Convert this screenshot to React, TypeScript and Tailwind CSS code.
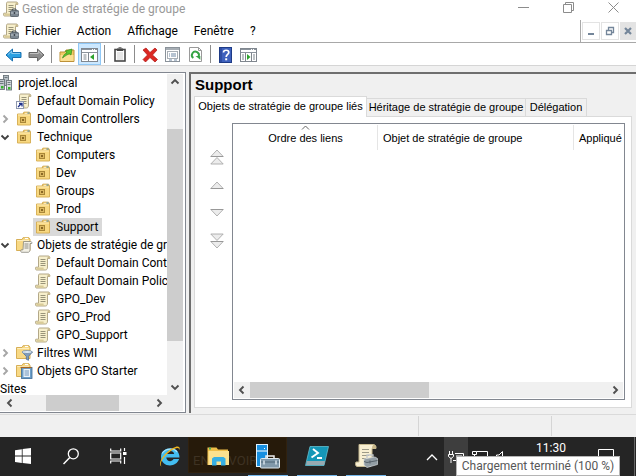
import type { ReactNode } from 'react';

const uiFont = "font-['Roboto','Noto_Sans',sans-serif]";
const classicFont = "font-['Liberation_Sans',Arial,sans-serif]";

/* ---------- icons ---------- */

function ScrollIcon({ toolbox = false, shortcut = false }: { toolbox?: boolean; shortcut?: boolean }) {
  return (
    <svg width="16" height="16" viewBox="0 0 16 16" className="block shrink-0" aria-hidden="true">
      <path d="M4.500 1h8.500c1.500 0 2 .8 1.800 2.500H12.500V12c0 2-.8 3-2 3H1.500C.5 15 .3 13.500.8 12.200H3.500V3C3.500 1.800 3.800 1 4.500 1z" fill="#f7efcb" stroke="#aa9e7d" strokeWidth=".9" />
      <path d="M12.500 3.500c0-1.500.3-2.300 1-2.300s1.500.8 1.300 2.300z" fill="#c9b98b" />
      <path d="M1 12.500h7.500c0 1.500.5 2.300 1.500 2.300H2z" fill="#d9cb98" />
      <path d="M5.500 4.500h5M5.500 6.500h5M5.500 8.500h5M5.500 10.500h5" stroke="#99947a" strokeWidth="1" />
      {toolbox && (
        <g>
          <path d="M9.500 9.500V8h3.500v1.500" fill="none" stroke="#4b5560" />
          <rect x="7.500" y="9.500" width="8" height="6" rx=".8" fill="#7c8791" stroke="#4f5963" strokeWidth=".8" />
          <path d="M8 12h7.500" stroke="#c7d0d7" strokeWidth=".9" />
          <rect x="10.700" y="11" width="1.500" height="2" fill="#3f474f" />
        </g>
      )}
      {shortcut && (
        <g>
          <rect x=".5" y="8.500" width="7" height="7" fill="#fff" stroke="#8d97ad" />
          <path d="M2 14l3.500-3.500M3 10.500h3v3" fill="none" stroke="#20328a" strokeWidth="1.300" />
        </g>
      )}
    </svg>
  );
}

function OuIcon() {
  return (
    <svg width="16" height="16" viewBox="0 0 16 16" className="block shrink-0" aria-hidden="true">
      <path d="M7 3l.8-2h5.700l1 2z" fill="#e8c260" stroke="#c99c3c" strokeWidth=".6" />
      <path d="M1.500 3h13v11h-13z" fill="#f8d880" stroke="#d5ab4e" strokeWidth=".9" />
      <path d="M8.500 2.300h3" stroke="#fff6d8" />
      <rect x="11.500" y="1.500" width="2" height="1" fill="#4d9cda" />
      <path d="M2 4h12" stroke="#fdeab4" />
      <rect x="4.500" y="6.500" width="5" height="5" fill="#dcb962" stroke="#a98637" />
      <rect x="6" y="8" width="2" height="2" fill="#8a6824" />
    </svg>
  );
}

function FolderIcon({ overlay }: { overlay: 'scroll' | 'filter' | 'starter' }) {
  return (
    <svg width="17" height="16" viewBox="0 0 17 16" className="block shrink-0" aria-hidden="true">
      <path d="M.5 2.500h5.500l1-1.800h6l1 1.800V13.500H.5z" fill="#f8d985" stroke="#d3a849" strokeWidth=".9" />
      <path d="M1.200 3.500h12" stroke="#fdedbd" />
      <rect x="9" y="1" width="3" height="1" fill="#fff" />
      {overlay === 'scroll' && (
        <g>
          <path d="M7.500 4.500h7c1.200 0 1.500 1 1.300 2H14v6c0 1.800-.7 2.800-2 2.800H5.500c-1-.3-.9-1.600-.5-2.500H7z" fill="#f3f1e6" stroke="#88867c" strokeWidth=".8" />
          <path d="M8.500 7h4M8.500 9h4M8.500 11h4" stroke="#77776d" strokeWidth=".8" />
        </g>
      )}
      {overlay === 'filter' && (
        <g>
          <path d="M6 7h10.500l-4 4.300v4l-2.200-1v-3z" fill="#7e9cbd" stroke="#546f8f" strokeWidth=".8" />
          <ellipse cx="11.200" cy="7" rx="5" ry="1.500" fill="#dce9f4" stroke="#64809e" strokeWidth=".7" />
        </g>
      )}
      {overlay === 'starter' && (
        <g>
          <rect x="5.500" y="4.500" width="10.500" height="11" fill="#6d9fc9" stroke="#3d6a95" strokeWidth=".8" />
          <rect x="7.500" y="6" width="6.500" height="8" fill="#edf4fa" />
          <path d="M8.500 8h4.500M8.500 10h4.500M8.500 12h4.500" stroke="#4a7aa8" strokeWidth=".8" />
          <path d="M4.500 4.500h11" stroke="#a9651c" strokeWidth="1.200" />
        </g>
      )}
    </svg>
  );
}

function DomainIcon() {
  return (
    <svg width="13" height="16" viewBox="0 0 13 16" className="block shrink-0" aria-hidden="true">
      <rect x="3.500" y=".5" width="5" height="10" fill="#b6bec4" stroke="#6c757c" strokeWidth=".9" />
      <rect x="-.5" y="4.500" width="5" height="10" fill="#c4cbd0" stroke="#6c757c" strokeWidth=".9" />
      <rect x="6.500" y="5.500" width="5" height="9.500" fill="#d4dade" stroke="#6c757c" strokeWidth=".9" />
      <path d="M4.500 2.500h3M0 6.500h3.500M7.500 7.500h3M0 8.500h3.500M7.500 9.500h3" stroke="#59636b" strokeWidth=".8" />
      <rect x="1" y="11" width="2.500" height="2.500" fill="#35b32d" />
      <rect x="8" y="12" width="2.500" height="2.500" fill="#35b32d" />
    </svg>
  );
}

type Direction = 'up' | 'down' | 'left' | 'right';

function Chevron({ dir, tone = 'text-[#505050]' }: { dir: Direction; tone?: string }) {
  const paths: Record<Direction, string> = {
    up: 'M1.500 6.500L5 3l3.500 3.500',
    down: 'M1.500 3.500L5 7l3.500-3.500',
    left: 'M6.500 1.500L3 5l3.500 3.500',
    right: 'M3.500 1.500L7 5 3.500 8.500',
  };
  return (
    <svg width="10" height="10" viewBox="0 0 10 10" className={`block shrink-0 ${tone}`} aria-hidden="true">
      <path d={paths[dir]} fill="none" stroke="currentColor" strokeWidth="1.900" />
    </svg>
  );
}

function Arrow({ color, edge, flip = false }: { color: string; edge: string; flip?: boolean }) {
  return (
    <svg width="17" height="16" viewBox="0 0 17 16" className={flip ? '-scale-x-100' : ''} aria-hidden="true">
      <path d="M1 8l6.500-6v3.500H16v5H7.500V14z" fill={color} stroke={edge} strokeLinejoin="round" />
      <path d="M3 7.600L6.700 4.200V6.500H15" fill="none" stroke="#fff" strokeOpacity=".45" />
    </svg>
  );
}

function PaneIcon({ left }: { left: boolean }) {
  return (
    <svg width="17" height="14" viewBox="0 0 17 14" aria-hidden="true">
      <rect x=".5" y=".5" width="16" height="13" fill="#fff" stroke="#80878f" />
      <path d="M1 1.500h15" stroke="#8b939c" />
      <path d="M11 1.500h1M13 1.500h1" stroke="#fff" />
      <path d="M1 4.500h15" stroke="#8b939c" />
      <path d={left ? 'M7.500 5v8' : 'M5.500 5v8M11.500 5v8'} stroke="#80878f" />
      <path d={left ? 'M2.500 7h3M2.500 9h3M2.500 11h3' : 'M2 7h2M2 9h2M2 11h2M13 7h2M13 9h2M13 11h2'} stroke="#7d858c" />
      <path d={left ? 'M13 6v6l-4-3z' : 'M7 6v6l3.500-3z'} fill="#2da22c" />
    </svg>
  );
}

/* ---------- scroll bars ---------- */

function ScrollButton({ dir }: { dir: Direction }) {
  return (
    <button type="button" aria-label={dir} className="flex size-4 shrink-0 items-center justify-center">
      <Chevron dir={dir} />
    </button>
  );
}

/* ---------- menu and tool bars ---------- */

function TitleBar() {
  return (
    <header className="flex h-5 shrink-0 items-start bg-white pt-px pl-[3px]">
      <ScrollIcon toolbox />
      <h1 className="pl-[3px] text-[12px] leading-4 text-[#999]">Gestion de stratégie de groupe</h1>
      <div className="ml-auto flex h-[13px] text-[#8c8c8c]">
        <button type="button" aria-label="Réduire" className="flex w-[45px] items-center justify-center">
          <svg width="11" height="11" viewBox="0 0 11 11"><path d="M0 5.500h11" stroke="currentColor" /></svg>
        </button>
        <button type="button" aria-label="Restaurer" className="flex w-[45px] items-center justify-center">
          <svg width="11" height="11" viewBox="0 0 11 11"><path d="M.5 2.500h8v8h-8zM2.500 2.500v-2h8v8h-2" fill="none" stroke="currentColor" /></svg>
        </button>
        <button type="button" aria-label="Fermer" className="flex w-[45px] items-center justify-center">
          <svg width="11" height="11" viewBox="0 0 11 11"><path d="M.5.5l10 10M10.500.5l-10 10" stroke="currentColor" /></svg>
        </button>
      </div>
    </header>
  );
}

function MenuBar() {
  return (
    <div className="flex h-[23px] shrink-0 border-b border-[#a8a8a8] bg-white">
      <div className="flex grow items-center pl-[3px]">
        <ScrollIcon toolbox />
        <nav className="flex gap-4 pl-1.5 text-[12px] leading-4">
          {['Fichier', 'Action', 'Affichage', 'Fenêtre', '?'].map((m) => (
            <button key={m} type="button">{m}</button>
          ))}
        </nav>
      </div>
      <div className="flex items-center gap-px border-l border-[#a8a8a8] pl-px text-[#74869a]">
        <button type="button" aria-label="Réduire la fenêtre" className="flex size-[18px] items-center justify-center border border-[#e3e3e3]">
          <svg width="12" height="12" viewBox="0 0 12 12"><path d="M3 9h6" stroke="currentColor" strokeWidth="2" /></svg>
        </button>
        <button type="button" aria-label="Restaurer la fenêtre" className="flex size-[18px] items-center justify-center border border-[#e3e3e3]">
          <svg width="12" height="12" viewBox="0 0 12 12"><path d="M2.500 5.500h5v4h-5zM4.500 5V2.500h5v5H8M2 5.500h6M4 2.500h6" fill="none" stroke="currentColor" strokeWidth="1.300" /></svg>
        </button>
        <button type="button" aria-label="Fermer la fenêtre" className="flex h-[18px] w-4 items-center justify-center bg-[#e3e3e3]">
          <svg width="12" height="12" viewBox="0 0 12 12"><path d="M3 3l6 6M9 3L3 9" stroke="currentColor" strokeWidth="2.200" /></svg>
        </button>
      </div>
    </div>
  );
}

function Tool({ label, active = false, children }: { label: string; active?: boolean; children: ReactNode }) {
  return (
    <button
      type="button"
      aria-label={label}
      className={`flex h-[22px] w-[23px] items-center justify-center border pt-px ${active ? 'border-[#90c8f6] bg-[#cce8ff]' : 'border-transparent'}`}
    >
      <span className="shrink-0">{children}</span>
    </button>
  );
}

function Separator() {
  return <span className="mx-[3px] h-[18px] w-px bg-[#8c8c8c]" />;
}

function ToolBar() {
  return (
    <div role="toolbar" className="flex h-[23px] shrink-0 items-center border-b border-[#d5d5d5] bg-white pl-0.5">
      <Tool label="Précédent"><Arrow color="#2ba0e2" edge="#1970b0" /></Tool>
      <Tool label="Suivant"><Arrow color="#8d8d8d" edge="#666" flip /></Tool>
      <Separator />
      <Tool label="Dossier parent">
        <svg width="16" height="16" viewBox="0 0 16 16">
          <path d="M1 5h5l1-2h8v11.500H1z" fill="#f2ca68" stroke="#bd9137" />
          <path d="M1.500 8h13v6h-13z" fill="#fbdf94" />
          <path d="M3.500 11c1-3 2.500-4.500 4.500-5L6.500 4l6.500-2-1 6-1.800-1.200C8.500 7.500 6 9 3.500 11z" fill="#5cc52f" stroke="#358c1c" strokeWidth=".7" />
        </svg>
      </Tool>
      <Tool label="Arborescence" active><PaneIcon left /></Tool>
      <Separator />
      <Tool label="Coller">
        <svg width="12" height="15" viewBox="0 0 12 15">
          <rect x="1" y="2.500" width="10" height="11.500" fill="#fff" stroke="#484848" strokeWidth="1.600" />
          <path d="M3 1.500h6v2.500H3z" fill="#484848" /><path d="M4.500.8h3" stroke="#484848" />
          <path d="M3 6h6M3 8h6M3 10h6M3 12h6" stroke="#b9b9b9" strokeWidth=".7" />
        </svg>
      </Tool>
      <Separator />
      <Tool label="Supprimer">
        <svg width="16" height="16" viewBox="0 0 16 16">
          <path d="M1 3l3-2 4 4.500L13 1l2 2-4.500 5 5 4.500-2.500 2.500L8 10.500 3.500 15 1 12.500 5.500 8z" fill="#dc2822" stroke="#ad1512" strokeWidth=".7" />
        </svg>
      </Tool>
      <Tool label="Propriétés">
        <svg width="15" height="15" viewBox="0 0 15 15">
          <rect x=".5" y=".5" width="14" height="14" fill="#fff" stroke="#8a929a" />
          <path d="M1 2h13" stroke="#a6adb4" strokeWidth="2" />
          <rect x="2.500" y="4.500" width="10" height="7" fill="none" stroke="#a9afb5" />
          <path d="M4 7h1M4 9h1M6 7h5M6 9h5M4 13h3M9 13h3" stroke="#6e88a4" />
        </svg>
      </Tool>
      <Tool label="Actualiser">
        <svg width="13" height="15" viewBox="0 0 13 15">
          <path d="M.5.500h9l3 3v11H.5z" fill="#fff" stroke="#9a9a9a" /><path d="M9.500.5v3h3" fill="none" stroke="#9a9a9a" />
          <path d="M4.300 11A3.500 3.500 0 1 1 9.500 9.800" fill="none" stroke="#35a344" strokeWidth="1.900" />
          <path d="M6.500 9h4.800v3.800z" fill="#35a344" />
        </svg>
      </Tool>
      <Separator />
      <Tool label="Aide">
        <svg width="13" height="16" viewBox="0 0 13 16">
          <rect x=".5" y=".5" width="12" height="15" fill="#3e61bd" stroke="#1e3b86" /><path d="M2 1v14" stroke="#203d8b" />
          <path d="M4.500 5.500C4.500 2.500 9.800 2.500 9.800 5.500 9.800 7.500 7.200 7.500 7.200 10" fill="none" stroke="#fff" strokeWidth="1.700" />
          <rect x="6.200" y="11.300" width="2" height="2" fill="#fff" />
        </svg>
      </Tool>
      <Tool label="Volet Actions"><PaneIcon left={false} /></Tool>
    </div>
  );
}

/* ---------- tree ---------- */

type Node = { label: string; level: 0 | 1 | 2; icon?: ReactNode; state?: 'open' | 'closed'; selected?: boolean };

const nodes: Node[] = [
  { label: 'projet.local', level: 0, icon: <DomainIcon /> },
  { label: 'Default Domain Policy', level: 1, icon: <ScrollIcon shortcut /> },
  { label: 'Domain Controllers', level: 1, icon: <OuIcon />, state: 'closed' },
  { label: 'Technique', level: 1, icon: <OuIcon />, state: 'open' },
  { label: 'Computers', level: 2, icon: <OuIcon /> },
  { label: 'Dev', level: 2, icon: <OuIcon /> },
  { label: 'Groups', level: 2, icon: <OuIcon /> },
  { label: 'Prod', level: 2, icon: <OuIcon /> },
  { label: 'Support', level: 2, icon: <OuIcon />, selected: true },
  { label: 'Objets de stratégie de groupe', level: 1, icon: <FolderIcon overlay="scroll" />, state: 'open' },
  { label: 'Default Domain Controllers Policy', level: 2, icon: <ScrollIcon /> },
  { label: 'Default Domain Policy', level: 2, icon: <ScrollIcon /> },
  { label: 'GPO_Dev', level: 2, icon: <ScrollIcon /> },
  { label: 'GPO_Prod', level: 2, icon: <ScrollIcon /> },
  { label: 'GPO_Support', level: 2, icon: <ScrollIcon /> },
  { label: 'Filtres WMI', level: 1, icon: <FolderIcon overlay="filter" />, state: 'closed' },
  { label: 'Objets GPO Starter', level: 1, icon: <FolderIcon overlay="starter" />, state: 'closed' },
  { label: 'Sites', level: 0 },
];

function TreeRow({ node }: { node: Node }) {
  const gutter = node.level === 0 ? 'w-0' : node.level === 1 ? 'w-4' : 'w-[33px]';
  return (
    <li role="treeitem" aria-selected={!!node.selected} className="flex h-[18px] items-center whitespace-nowrap">
      <span className={`flex shrink-0 ${gutter}`}>
        {node.state === 'closed' && <Chevron dir="right" tone="text-[#a6a6a6]" />}
        {node.state === 'open' && <Chevron dir="down" tone="text-[#404040]" />}
      </span>
      <span className={`flex h-[18px] items-center ${node.level === 2 ? 'px-0.5' : ''} ${node.selected ? 'bg-[#d9d9d9] pr-1' : ''}`}>
        {node.icon && <span className={`flex shrink-0 ${node.level === 0 ? 'w-[18px]' : 'w-[21px]'}`}>{node.icon}</span>}
        <span>{node.label}</span>
      </span>
    </li>
  );
}

function TreePane() {
  return (
    <aside className="flex w-[186px] shrink-0 flex-col border-y border-r border-[#828790] bg-white pt-px pr-0.5 pb-px">
      <div className="flex min-h-0 grow">
        <ul role="tree" className="min-h-0 min-w-0 grow overflow-hidden text-[12px] leading-[18px]">
          {nodes.map((n, i) => <TreeRow key={i} node={n} />)}
        </ul>
        <div className="flex w-4 shrink-0 flex-col items-center bg-[#f0f0f0]">
          <ScrollButton dir="up" />
          <div className="flex w-full grow flex-col pt-[39px]">
            <span className="h-[212px] bg-[#cdcdcd]" />
          </div>
          <ScrollButton dir="down" />
        </div>
      </div>
      <div className="flex h-4 shrink-0 items-center bg-[#f0f0f0] pr-4 pl-0.5">
        <ScrollButton dir="left" />
        <div className="flex h-full grow pl-7"><span className="w-[73px] bg-[#cdcdcd]" /></div>
        <ScrollButton dir="right" />
      </div>
    </aside>
  );
}

/* ---------- detail pane ---------- */

function OrderIcon({ double = false, down = false }: { double?: boolean; down?: boolean }) {
  return (
    <svg width="14" height={double ? 16 : 9} viewBox={double ? '0 0 14 16' : '0 0 14 9'} className={`block ${down ? 'rotate-180' : ''}`} aria-hidden="true">
      <path d="M.8 7.500h12.400L7 1z" fill="#ececec" stroke="#a9a9a9" strokeWidth=".9" />
      {double && <path d="M.8 15h12.400L7 8.500z" fill="#ececec" stroke="#a9a9a9" strokeWidth=".9" />}
      <path d="M.8 7.500h12.400" stroke="#989898" />
    </svg>
  );
}

function DetailPane() {
  return (
    <main className={`flex min-w-0 grow flex-col border-t-2 border-l-2 border-[#6e6e6e] bg-[#f0f0f0] ${classicFont}`}>
      <h2 className="h-[22px] shrink-0 pl-1 text-[15px] leading-[22px] font-bold">Support</h2>
      <div role="tablist" className="flex h-5 shrink-0 items-end pl-[3px] text-[11px]">
        <button type="button" role="tab" aria-selected="true" className="z-10 -mb-px h-[21px] w-[173px] border border-b-0 border-[#dadada] bg-white pb-0.5 whitespace-nowrap">Objets de stratégie de groupe liés</button>
        <button type="button" role="tab" aria-selected="false" className="h-[18px] w-[159px] border border-b-0 border-l-0 border-[#dadada] whitespace-nowrap">Héritage de stratégie de groupe</button>
        <button type="button" role="tab" aria-selected="false" className="h-[18px] w-[61px] border border-b-0 border-l-0 border-[#dadada]">Délégation</button>
      </div>
      <section className="mr-1 mb-[5px] ml-[3px] flex min-h-0 grow border border-[#dadada] bg-white pt-1.5 pr-1.5 pb-[7px]">
        <div className="flex w-[37px] shrink-0 flex-col items-center pt-[26px] pl-1.5">
          <button type="button" aria-label="Déplacer en premier" className="flex h-8"><OrderIcon double /></button>
          <button type="button" aria-label="Monter" className="flex h-[27px]"><OrderIcon /></button>
          <button type="button" aria-label="Descendre" className="flex h-[25px]"><OrderIcon down /></button>
          <button type="button" aria-label="Déplacer en dernier"><OrderIcon double down /></button>
        </div>
        <div className="flex min-w-0 grow flex-col border border-[#828790] p-px">
          <div className="grow overflow-hidden">
            <table className="w-full table-fixed border-separate border-spacing-0 text-[11px] leading-4">
              <thead>
                <tr className="h-[25px]">
                  <th scope="col" className="w-36 border-r border-[#e5e5e5] p-0 font-normal">
                    <span className="flex flex-col items-center">
                      <svg width="9" height="5" viewBox="0 0 9 5" className="block" aria-hidden="true"><path d="M1 4.500l3.500-3.500L8 4.500" fill="none" stroke="#666" /></svg>
                      <span className="pb-1">Ordre des liens</span>
                    </span>
                  </th>
                  <th scope="col" className="w-[196px] border-r border-[#e5e5e5] p-0 pl-[5px] text-left font-normal">Objet de stratégie de groupe</th>
                  <th scope="col" className="overflow-hidden p-0 pl-[5px] text-left font-normal whitespace-nowrap">Appliqué</th>
                </tr>
              </thead>
            </table>
          </div>
          <div className="flex h-4 shrink-0 items-center bg-[#f0f0f0]">
            <ScrollButton dir="left" />
            <div className="flex h-full grow"><span className="w-1/2 bg-[#cdcdcd]" /></div>
            <ScrollButton dir="right" />
          </div>
        </div>
      </section>
    </main>
  );
}

/* ---------- task bar ---------- */

function TaskButton({ label, width, running = false, children }: { label: string; width: string; running?: boolean; children: ReactNode }) {
  return (
    <button type="button" aria-label={label} className={`flex h-full shrink-0 flex-col items-center ${width}`}>
      <span className="flex w-full grow items-center justify-center">{children}</span>
      <span className={`h-px w-10 ${running ? 'bg-[#76b9ed]' : ''}`} />
    </button>
  );
}

function TaskBar() {
  return (
    <footer className="relative flex h-[39px] shrink-0 bg-[#252525] text-white">
      <TaskButton label="Démarrer" width="w-[46px]">
        <svg width="16" height="16" viewBox="0 0 16 16"><path d="M0 2.200L6.800 1.200v6.400H0zM7.600 1.100L16 0v7.600H7.600zM0 8.400h6.800v6.500L0 13.900zM7.600 8.400H16V16l-8.400-1.100z" fill="#fff" /></svg>
      </TaskButton>
      <TaskButton label="Rechercher" width="w-[49px]">
        <svg width="16" height="17" viewBox="0 0 16 17"><circle cx="10.300" cy="5.800" r="5" fill="none" stroke="#fff" strokeWidth="1.300" /><path d="M6.800 9.500L.5 16" stroke="#fff" strokeWidth="1.500" /></svg>
      </TaskButton>
      <TaskButton label="Affichage des tâches" width="w-[47px]">
        <svg width="17" height="16" viewBox="0 0 17 16"><path d="M.7.500v2.500h10V.5M.7 15.500V13h10v2.500M.7 5h10v6H.7zM14.500 0v3M14.500 9v7" fill="none" stroke="#fff" strokeWidth="1.200" /><rect x="13" y="4" width="3.500" height="3" fill="#fff" /></svg>
      </TaskButton>
      <TaskButton label="Internet Explorer" width="w-[55px]">
        <svg width="24" height="24" viewBox="0 0 24 24">
          <path d="M21.500 13.500H8.300c.3 4.200 5.500 4.800 7.200 1.600h5.600C18 24.500 3 23.500 3 12.500 3 2 21.500.500 21.500 13.500zM8.400 10h7.800c-.4-4-7.200-4-7.800 0z" fill="#43bdf0" />
          <path d="M4 9.500C8 3.500 17 4.500 19 8" fill="none" stroke="#a6e6ff" strokeWidth="1.300" />
          <path d="M3.500 22.500C-1 20 5.500 9 15 4c4-2.300 7.500-2.500 6.500 2.300C21.300 2.500 17 4 12.500 7.200 5.500 12 1 19.500 3.500 22.500z" fill="#efb51f" />
        </svg>
      </TaskButton>
      <div className="relative flex">
        <span className="absolute top-0 left-[-9px] flex h-9 w-[99px] items-center border border-[#30210e] bg-[#261a0a] pt-3 pl-1 text-[13px] whitespace-pre text-[#3e3223]">EN SAVOIR</span>
        <div className="relative flex">
          <TaskButton label="Explorateur de fichiers" width="w-[43px]">
            <svg width="23" height="19" viewBox="0 0 23 19">
              <path d="M.5.5h9l1.500 2h10V18H.5z" fill="#efbe48" /><path d="M1.500 4h20.500v14H1.500z" fill="#fbe18f" /><path d="M2 1.500h2" stroke="#4bae5b" strokeWidth="2" />
              <path d="M5 18.500v-7l2-1.500h9.500l2 1.500v7H14v-4H9.500v4z" fill="#36afe4" />
            </svg>
          </TaskButton>
          <TaskButton label="Gestionnaire de serveur" width="w-[56px]" running>
            <svg width="24" height="25" viewBox="0 0 24 25">
              <rect x=".5" y=".5" width="11" height="22" fill="#168fe0" stroke="#dff2ff" /><path d="M1 7h10M8.500 4v1" stroke="#fff" />
              <path d="M10 15v-3h8v3" fill="none" stroke="#eee" strokeWidth="1.500" />
              <rect x="4.500" y="14.500" width="19" height="9.500" rx="1" fill="#8199aa" stroke="#dfe9ef" /><path d="M5 18h18" stroke="#4f6676" /><path d="M8 16.500v4M20 16.500v4" stroke="#d7e4eb" strokeWidth="1.500" />
            </svg>
          </TaskButton>
        </div>
      </div>
      <TaskButton label="PowerShell" width="w-[42px]" running>
        <svg width="24" height="20" viewBox="0 0 24 20">
          <path d="M5 .5h18.500L19 19.500H.5z" fill="#1597b7" stroke="#62bfd1" strokeWidth=".8" /><path d="M2 15h18l-1 4H1z" fill="#98aab1" />
          <path d="M8 3l5 4-6.500 4.500M12 12h5" fill="none" stroke="#fff" strokeWidth="1.900" />
        </svg>
      </TaskButton>
      <TaskButton label="Gestion de stratégie de groupe" width="w-14" running>
        <svg width="23" height="24" viewBox="0 0 23 24">
          <path d="M4 .5h14c2 0 3.500 1.500 3 4h-4V18c0 3-1 4.500-3 4.500H2C.2 22 .2 19.500 1 18h3z" fill="#f8efd2" stroke="#c6b990" /><path d="M17 4.500C17 2 18 .8 19 .8s2.500 1.500 2 3.700z" fill="#c7b688" />
          <path d="M7 5.500h7M7 8.500h7M7 11.500h7M7 14.500h4" stroke="#9d9a88" /><path d="M12 14v-3h6v3" fill="none" stroke="#c2c7ca" strokeWidth="1.300" />
          <path d="M9 15l11-2 2.500 1.500v6L12 23.500 9 21z" fill="#929da4" stroke="#d3d8db" strokeWidth=".7" /><path d="M9 17.500l3 1 10.500-2M15 16.500v3" fill="none" stroke="#56616a" />
        </svg>
      </TaskButton>

      <div className="ml-auto flex h-full">
        <button type="button" aria-label="Afficher les icônes cachées" className="flex w-6 items-center justify-center">
          <svg width="12" height="8" viewBox="0 0 12 8"><path d="M1 7l5-5 5 5" fill="none" stroke="#fff" strokeWidth="1.300" /></svg>
        </button>
        <button type="button" aria-label="Batterie" className="flex w-6 items-center justify-center bg-[#3e3e3e]">
          <svg width="16" height="12" viewBox="0 0 16 12"><path d="M1.500 0v3M4.500 0v3M.5 3.500h5v2L3 7.500.5 5.500zM3 7v5M7 2.500h8.500v7H5M8 5h6M8 7h6" fill="none" stroke="#fff" /></svg>
        </button>
        <button type="button" aria-label="Réseau" className="flex w-6 items-center justify-center">
          <svg width="16" height="13" viewBox="0 0 16 13"><path d="M.5 1.500h4v3h-4zM2.500 4.500V12M4.500 1.500h11v9H5" fill="none" stroke="#fff" /></svg>
        </button>
        <button type="button" aria-label="Volume" className="flex w-6 items-center pl-1">
          <svg width="8" height="12" viewBox="0 0 8 12"><path d="M6.500.5v11L3 8H.5V4H3z" fill="none" stroke="#fff" /></svg>
        </button>
        <time className="w-[70px] pt-[3px] text-center text-[12px] leading-4">11:30</time>
        <button type="button" aria-label="Notifications" className="flex w-10 items-center justify-center">
          <svg width="16" height="16" viewBox="0 0 16 16"><path d="M.5.5h15v11h-4v4l-4-4h-7z" fill="none" stroke="#fff" /></svg>
        </button>
        <span className="mr-px ml-2 w-px bg-[#666]" />
      </div>
      <div role="tooltip" className="absolute right-4 bottom-0 flex h-5 w-[164px] items-center justify-center border border-[#b5b5b5] bg-white text-[12px] whitespace-nowrap text-[#575757]">
        Chargement terminé (100 %)
      </div>
    </footer>
  );
}

export default function App() {
  return (
    <div className={`flex h-screen w-full flex-col overflow-hidden bg-[#f0f0f0] text-black ${uiFont}`}>
      <TitleBar />
      <MenuBar />
      <ToolBar />
      <div className="flex min-h-0 grow gap-[3px] pt-1.5">
        <TreePane />
        <DetailPane />
      </div>
      <div role="status" className="mt-px flex h-[23px] shrink-0 justify-end border-t border-[#dadada] py-px">
        <span className="w-[133px] border-l border-[#d5d5d5]" />
        <span className="w-[85px] border-l border-[#d5d5d5]" />
      </div>
      <TaskBar />
    </div>
  );
}
